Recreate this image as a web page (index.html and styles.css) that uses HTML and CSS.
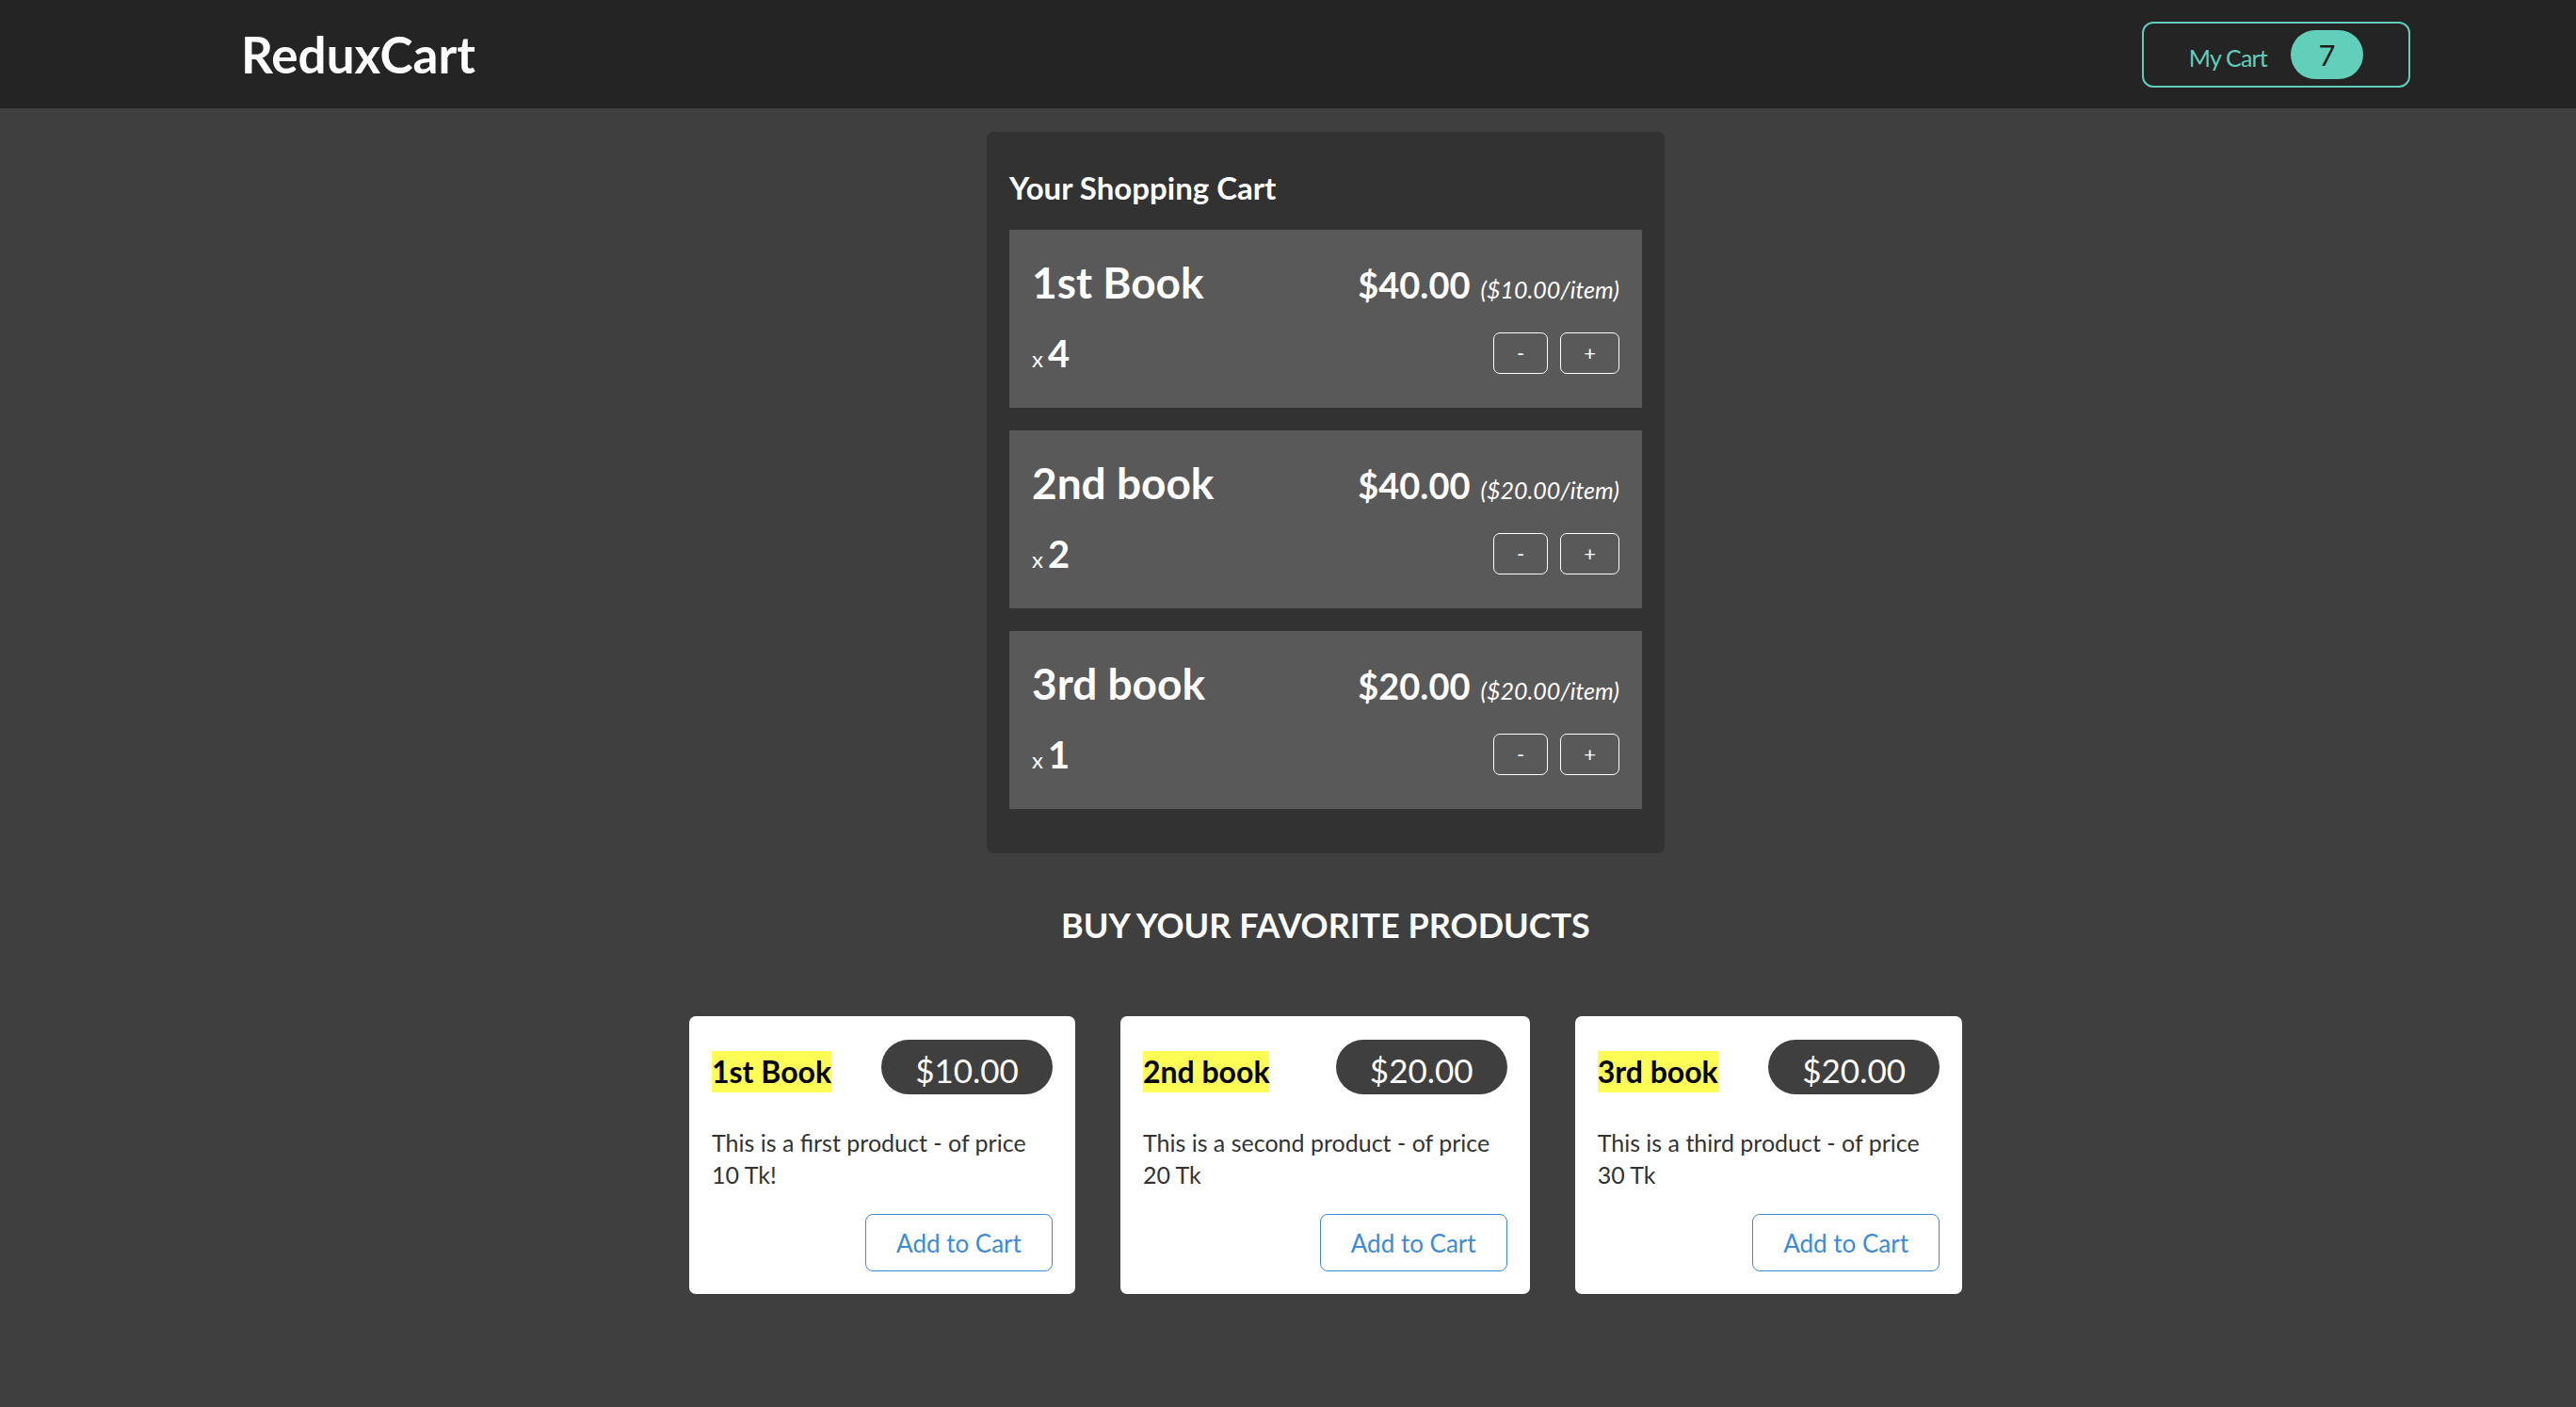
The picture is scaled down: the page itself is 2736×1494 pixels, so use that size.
FILE: index.html
```html
<!DOCTYPE html>
<html lang="en">
<head>
<meta charset="utf-8">
<title>ReduxCart</title>
<link rel="stylesheet" href="styles.css">
</head>
<body>
<header class="topbar">
  <h1 class="logo">ReduxCart</h1>
  <button class="cart-button"><span class="cart-button__label">My Cart</span><span class="badge">7</span></button>
</header>
<main class="main">
  <section class="cart">
    <h2 class="cart__title">Your Shopping Cart</h2>
    <ul class="cart__list">
      <li class="item">
        <div class="item__head">
          <h3 class="item__name">1st Book</h3>
          <div class="item__price">$40.00<span class="item__unit">($10.00/item)</span></div>
        </div>
        <div class="item__details">
          <div class="item__qty">x<span class="item__count">4</span></div>
          <div class="item__actions"><button class="qty-btn">-</button><button class="qty-btn">+</button></div>
        </div>
      </li>
      <li class="item">
        <div class="item__head">
          <h3 class="item__name">2nd book</h3>
          <div class="item__price">$40.00<span class="item__unit">($20.00/item)</span></div>
        </div>
        <div class="item__details">
          <div class="item__qty">x<span class="item__count">2</span></div>
          <div class="item__actions"><button class="qty-btn">-</button><button class="qty-btn">+</button></div>
        </div>
      </li>
      <li class="item">
        <div class="item__head">
          <h3 class="item__name">3rd book</h3>
          <div class="item__price">$20.00<span class="item__unit">($20.00/item)</span></div>
        </div>
        <div class="item__details">
          <div class="item__qty">x<span class="item__count">1</span></div>
          <div class="item__actions"><button class="qty-btn">-</button><button class="qty-btn">+</button></div>
        </div>
      </li>
    </ul>
  </section>

  <section class="products">
    <h2 class="products__title">BUY YOUR FAVORITE PRODUCTS</h2>
    <ul class="products__list">
      <li class="card">
        <div class="card__head">
          <h3 class="card__name">1st Book</h3>
          <div class="card__price">$10.00</div>
        </div>
        <p class="card__desc">This is a first product - of price 10 Tk!</p>
        <div class="card__actions"><button class="add-btn">Add to Cart</button></div>
      </li>
      <li class="card">
        <div class="card__head">
          <h3 class="card__name">2nd book</h3>
          <div class="card__price">$20.00</div>
        </div>
        <p class="card__desc">This is a second product - of price 20 Tk</p>
        <div class="card__actions"><button class="add-btn">Add to Cart</button></div>
      </li>
      <li class="card">
        <div class="card__head">
          <h3 class="card__name">3rd book</h3>
          <div class="card__price">$20.00</div>
        </div>
        <p class="card__desc">This is a third product - of price 30 Tk</p>
        <div class="card__actions"><button class="add-btn">Add to Cart</button></div>
      </li>
    </ul>
  </section>
</main>
</body>
</html>
```

FILE: styles.css
```css
* { box-sizing: border-box; }

html, body {
  margin: 0;
  padding: 0;
}

html {
  background: #3f3f3f;
}

body {
  background: #3f3f3f;
  font-family: Lato, "Liberation Sans", sans-serif;
  color: #ffffff;
}

/* Header */
.topbar {
  height: 115px;
  background: #242424;
  display: flex;
  align-items: center;
  justify-content: space-between;
  padding: 0 176px 0 256px;
}

.logo {
  margin: 0;
  font-size: 53px;
  font-weight: 700;
  color: #ffffff;
  line-height: 1;
}

.cart-button {
  display: flex;
  align-items: center;
  height: 70px;
  padding: 0 48px 0 48px;
  background: transparent;
  border: 2px solid #5fcdb8;
  border-radius: 12px;
  font-family: inherit;
  color: #62cfba;
  cursor: pointer;
}

.cart-button__label {
  font-size: 25px;
  letter-spacing: -0.8px;
  margin-top: 6px;
}

.badge {
  margin-left: 25px;
  width: 77px;
  height: 52px;
  border-radius: 26px;
  background: #62cfba;
  color: #1e1e1e;
  font-size: 31px;
  display: flex;
  align-items: center;
  justify-content: center;
}

/* Main */
.main {
  display: flex;
  flex-direction: column;
  align-items: center;
  padding-left: 80px;
}

.cart {
  margin-top: 25px;
  width: 720px;
  background: #323232;
  border-radius: 7px;
  padding: 24px 24px 23px;
}

.cart__title {
  margin: 16px 0 26px;
  font-size: 33px;
  line-height: 38px;
  font-weight: 700;
}

.cart__list {
  list-style: none;
  margin: 0;
  padding: 0;
}

.item {
  background: #595959;
  padding: 28px 24px 36px;
  margin-bottom: 24px;
}

.item__head {
  display: flex;
  justify-content: space-between;
  align-items: baseline;
  height: 56px;
}

.item__name {
  margin: 0;
  font-size: 46px;
  line-height: 56px;
  font-weight: 700;
}

.item__price {
  font-size: 38px;
  font-weight: 700;
}

.item__unit {
  margin-left: 11px;
  font-size: 25px;
  font-weight: 400;
  font-style: italic;
}

.item__details {
  margin-top: 25px;
  display: flex;
  justify-content: space-between;
  align-items: center;
  height: 44px;
}

.item__qty {
  font-size: 24px;
  line-height: 44px;
  padding-top: 6px;
}

.item__count {
  margin-left: 5px;
  font-size: 40px;
  font-weight: 700;
}

.item__actions {
  display: flex;
  gap: 13px;
}

.qty-btn {
  height: 44px;
  padding: 0 24px;
  background: transparent;
  border: 1px solid #ffffff;
  border-radius: 7px;
  color: #ffffff;
  font-family: inherit;
  font-size: 22px;
  line-height: 1;
  cursor: pointer;
}

/* Products */
.products {
  display: flex;
  flex-direction: column;
  align-items: center;
}

.products__title {
  margin: 55px 0 76px;
  font-size: 36px;
  line-height: 42px;
  font-weight: 700;
}

.products__list {
  list-style: none;
  margin: 0;
  padding: 0;
  width: 1352px;
  display: flex;
  gap: 48px;
}

.card {
  flex: 0 1 auto;
  background: #ffffff;
  border-radius: 7px;
  padding: 25px 24px 24px;
  color: #333333;
}

.card__head {
  display: flex;
  justify-content: space-between;
  align-items: baseline;
  gap: 40px;
}

.card__name {
  margin: 0;
  display: inline-block;
  font-size: 32px;
  line-height: 44px;
  font-weight: 700;
  color: #000000;
  background: #fdfd55;
}

.card__price {
  background: #3f3f3f;
  color: #ffffff;
  border-radius: 30px;
  font-size: 35px;
  line-height: 42px;
  padding: 11px 36px 5px;
}

.card__desc {
  margin: 34px 0 25px;
  font-size: 25px;
  line-height: 34px;
  color: #333333;
}

.card__actions {
  display: flex;
  justify-content: flex-end;
}

.add-btn {
  height: 61px;
  padding: 0 32px;
  background: #ffffff;
  border: 1px solid #3d8bd8;
  border-radius: 8px;
  color: #3d8bd8;
  font-family: inherit;
  font-size: 26px;
  cursor: pointer;
}
```
